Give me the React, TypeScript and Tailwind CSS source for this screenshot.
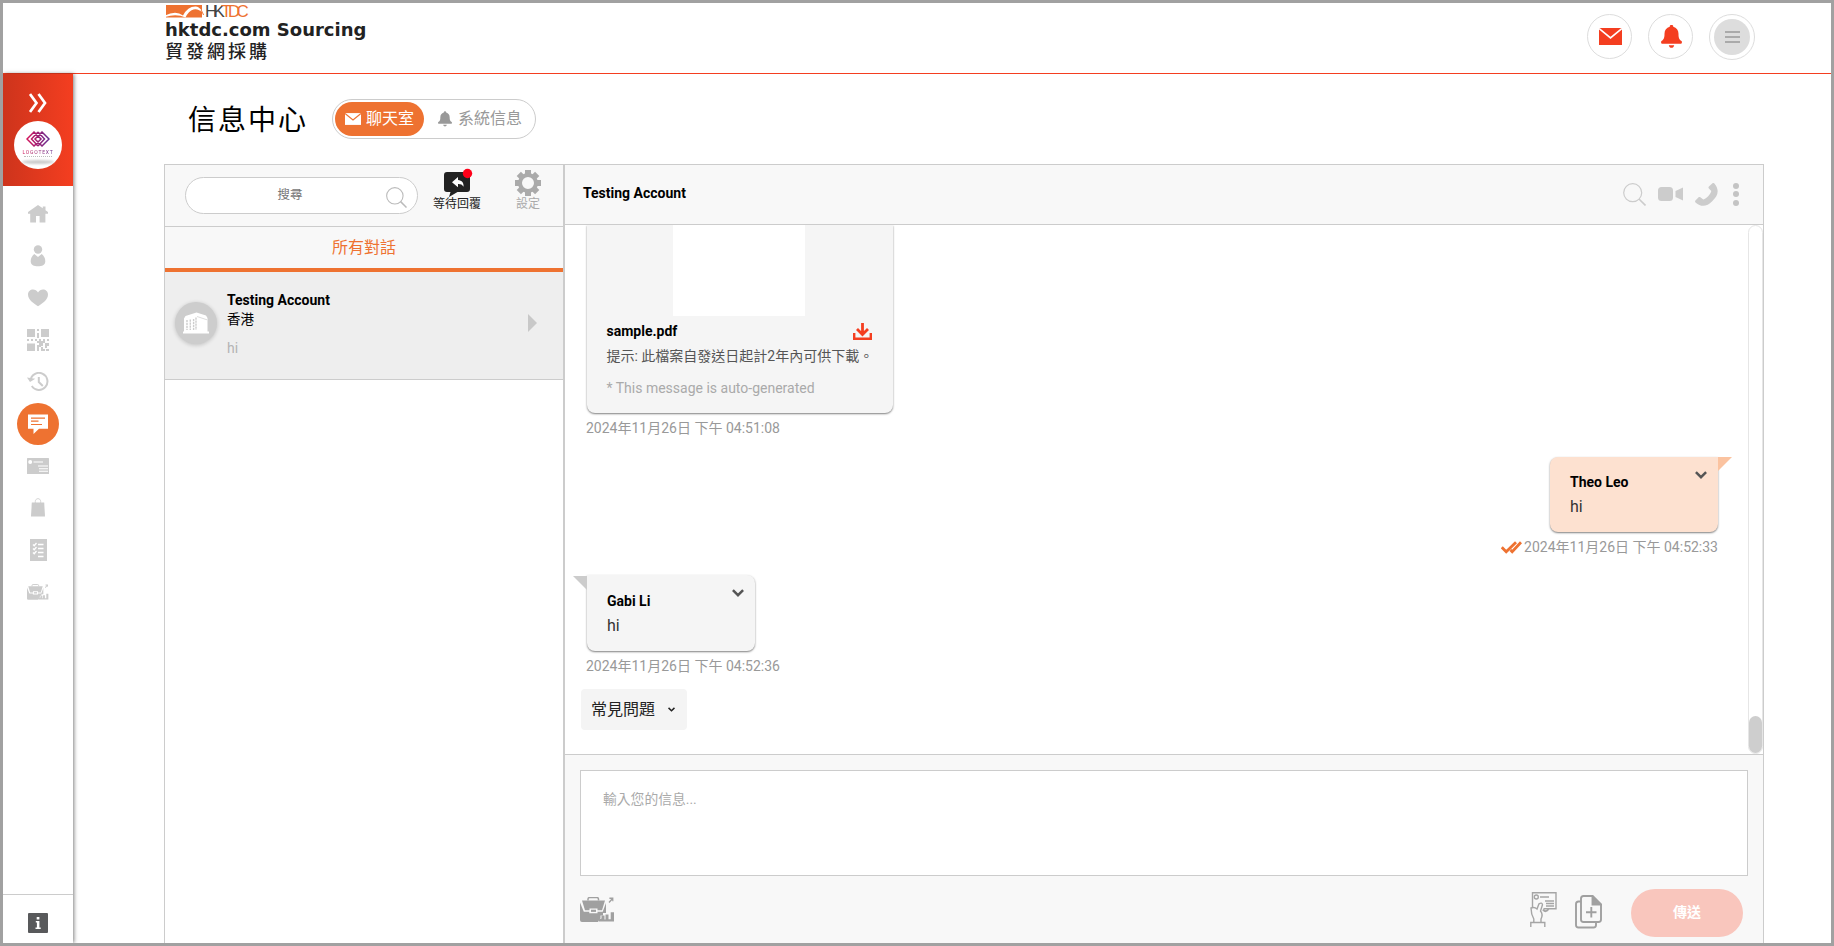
import type { ReactNode } from 'react'

type IconProps = { className?: string }

function HomeIcon(){
  return (
    <svg width="20" height="18" viewBox="0 0 20 18" fill="currentColor">
      <path d="M10 0 0 7v1.8h2.2V17.5H8V11h3.6v6.5h5.8V8.800H20V7l-2.500-1.800V1.500h-2.700v1.800z" />
    </svg>
  )
}

function UserIcon(){
  return (
    <svg width="16" height="22" viewBox="0 0 16 22" fill="currentColor">
      <circle cx="8" cy="4.500" r="4.200" />
      <path d="M4.300 9 8 12l3.700-3c2.300 1.600 3.600 4.400 3.600 7.200C15.300 20 12 21.200 8 21.200S.7 20 .7 16.200C.7 13.400 2 10.600 4.300 9z" />
    </svg>
  )
}

function HeartIcon(){
  return (
    <svg width="20" height="18" viewBox="0 0 20 18" fill="currentColor">
      <path d="M10 17.300C6 14.500 0 11 0 5.500 0 2.500 2.300.5 5 .5c2 0 4 1 5 3 1-2 3-3 5-3 2.700 0 5 2 5 5 0 5.500-6 9-10 11.800z" />
    </svg>
  )
}

function QrIcon(){
  return (
    <svg width="22" height="22" viewBox="0 0 22 22" fill="currentColor">
      <path d="M0 0h8v8H0zM14 0h8v8h-8zM0 14.500h8V22H0zM10 0h2v2h-2zM10 4h2v5h-2zM0 10h2v2H0zM4 10h2v2H4zM8 10h2v2H8zM20 10h2v2h-2zM12 10h2v2h4v2h-2v3h-2v-3h-4v-2h2zM16 10h2v2h-2zM10 16h2v6h-2zM12 14h2v4h-2zM14 18h2v4h-2zM18 14h4v3h-2v2h-2zM16 20h2v2h-2zM19 20h3v2h-3z" />
    </svg>
  )
}

function HistoryIcon(){
  return (
    <svg width="22" height="20" viewBox="0 0 22 20" fill="none" stroke="currentColor" strokeWidth="2">
      <path d="M3.500 8.500A8.500 8.500 0 1 1 4.800 14" />
      <path d="M0 5.500 3 10l5.300-3.300z" fill="currentColor" stroke="none" />
      <path d="M11.800 5v5l4 4" />
    </svg>
  )
}

function ChatIcon(){
  return (
    <svg width="20" height="20" viewBox="0 0 20 20">
      <path d="M0 .5h20v14.300h-9L5.500 20v-5.200H0z" fill="white" />
      <path d="M3 4.200h14M3 7.200h7.500M3 10.500h11" stroke="#ee7231" strokeWidth="1.200" />
    </svg>
  )
}

function CardIcon(){
  return (
    <svg width="22" height="16" viewBox="0 0 22 16">
      <rect width="22" height="16" rx=".5" fill="currentColor" />
      <circle cx="3.200" cy="4" r="2" fill="white" />
      <path d="M6.500 4H16M11 8h10M12 10.700h9M12 13.200h9" stroke="white" strokeWidth="1.100" />
    </svg>
  )
}

function BagIcon(){
  return (
    <svg width="14" height="19" viewBox="0 0 14 19" className="-mt-px">
      <path d="M.8 4.500h12.400L14 18.500H0z" fill="currentColor" />
      <path d="M4.300 5V3.500C4.300-.3 9.700-.3 9.700 3.500V5" fill="none" stroke="currentColor" strokeWidth=".8" />
    </svg>
  )
}

function ListIcon(){
  return (
    <svg width="17" height="22" viewBox="0 0 17 22">
      <rect width="17" height="22" fill="currentColor" />
      <path d="M8 5.500h5.500M8 9.500h5.500M8 13.500h5.500M8 17.500h5.500M3 5.500l1.200 1.200L6.500 4M3 9.500l1.200 1.200L6.500 8M3 13.500l1.200 1.200L6.500 12" fill="none" stroke="white" strokeWidth="1.300" />
    </svg>
  )
}

function BriefcaseIcon({ className }: IconProps){
  return (
    <svg className={className} viewBox="0 0 35 25" fill="currentColor">
      <path d="M8 3.500V2.200Q8 .6 9.600.6h7.300q1.600 0 1.600 1.600v1.300" fill="none" stroke="currentColor" strokeWidth="1.500" />
      <path d="M2 3.500h23L22 13.300h-4.500V11.500h-8v1.800H5z" />
      <path d="M0 5.500 3.800 14.800h5.500v1.500h8.200v-1.500h5.200L26 6v10h-3v2.500h-2.500V21L18 25H2q-2 0-2-2z" />
      <path d="M11 12.700h5v2.200h-5z" />
      <path d="M19 24.500v-2.300l2.500-.8V18.500h3v4h1v-5h3v4.800h2.200v-7H34v9.200zM28.500 5l2.700-3h-1.800V.5h4v3.800h-1.200V3l-2.700 3z" />
    </svg>
  )
}

function InfoIcon(){
  return (
    <svg width="20" height="20" viewBox="0 0 20 20">
      <rect width="20" height="20" rx="1" fill="#58595b" />
      <path d="M8.700 4h2.700v2.500H8.700zM7.800 8h3.600v6.500h1.300V16H7.500v-1.500h1.400V9.500H7.800z" fill="white" />
    </svg>
  )
}

function MailIcon({ className, line }: IconProps & { line: string }){
  return (
    <svg className={className} viewBox="0 0 23 17">
      <rect width="23" height="17" fill="currentColor" />
      <path d="M0 .5 11.500 10 23 .5" fill="none" stroke={line} strokeWidth="1.700" />
    </svg>
  )
}

function BellIcon({ className }: IconProps){
  return (
    <svg className={className} viewBox="0 0 21 23" fill="currentColor">
      <path d="M8.700 1.700a1.800 1.800 0 0 1 3.600 0c3.200.8 5.200 3.500 5.200 7 0 4 .5 5.600 3 7.300.8.700.5 2.800-.8 2.800H1.300C0 18.800-.3 16.700.5 16c2.500-1.700 3-3.300 3-7.300 0-3.500 2-6.200 5.200-7zM7.800 20.200h5.400c-.4 3.400-5 3.400-5.400 0z" />
    </svg>
  )
}

function SearchIcon({ className }: IconProps){
  return (
    <svg className={className} viewBox="0 0 23 23" fill="none" stroke="currentColor" strokeWidth="1.200">
      <circle cx="9.700" cy="9.700" r="9" />
      <path d="m16 16 6.500 6.500" strokeWidth="1.600" />
    </svg>
  )
}

function WaitingIcon(){
  return (
    <svg width="26" height="28" viewBox="0 0 26 28" className="overflow-visible">
      <path d="M3 3h20q3 0 3 3v14q0 3-3 3H13.500L5 28l1.500-5H3q-3 0-3-3V6q0-3 3-3z" fill="#222" />
      <path d="M8 13.300 14 8v3c4 .3 6 3 5.500 6.700-1.300-2.100-3-2.700-5.500-2.600v3.200z" fill="white" />
      <circle cx="23.500" cy="4.500" r="4.700" fill="#ff0019" />
    </svg>
  )
}

function GearIcon(){
  const teeth = [0, 45, 90, 135, 180, 225, 270, 315]
  return (
    <svg width="26" height="26" viewBox="0 0 26 26" fill="#aaa">
      {teeth.map(a => <path key={a} d="M10 0h6v5h-6z" transform={`rotate(${a} 13 13)`} />)}
      <circle cx="13" cy="13" r="8" fill="none" stroke="#aaa" strokeWidth="4" />
    </svg>
  )
}

function VideoIcon(){
  return (
    <svg width="25" height="14" viewBox="0 0 25 14" fill="currentColor">
      <rect width="15" height="14" rx="3.500" />
      <path d="m17.500 4 7.500-3.500v13L17.500 10z" />
    </svg>
  )
}

function PhoneIcon(){
  return (
    <svg width="23" height="23" viewBox="0 0 23 23" fill="currentColor">
      <path d="M17.500.3c.6-.5 1.400-.4 1.900.2 5.600 6.800 3.400 12.600-2.200 17.700-5.200 5.100-10.600 6.600-16.700 1.200-.7-.7-.6-1.400-.1-2l3-3c.6-.6 1.300-.6 1.900-.1l3 2.200c3.500-1.200 6.900-4.600 8-8.500l-2.400-2.600c-.6-.7-.6-1.300 0-1.900z" />
    </svg>
  )
}

function DownloadIcon(){
  return (
    <svg width="19" height="17" viewBox="0 0 19 17" fill="none" stroke="#f43e20" strokeWidth="2.800">
      <path d="M9.500 0v11M4 6l5.500 5.500L15 6" />
      <path d="M1.200 10v5.700h16.600V10" strokeWidth="2.400" />
    </svg>
  )
}

function DoubleTick(){
  return (
    <svg width="21" height="13" viewBox="0 0 21 13" fill="none" stroke="#ee7231" strokeWidth="2.800">
      <path d="m.8 6.300 4.400 4.400L15 1.200M9.500 9l1.700 1.700L20 1.200" />
    </svg>
  )
}

function HandCardIcon(){
  return (
    <svg width="27" height="36" viewBox="0 0 27 36" fill="none" stroke="#a5a5a5" strokeWidth="1.400">
      <path d="M2.500 15V.8H26v16H13.500" />
      <circle cx="6.300" cy="5" r="2" />
      <path d="M10 5h9M15 9h9M16 11.500h8M16 14h8" />
      <path d="M13 17.500q3 3.500 5.500-.5" strokeWidth="2" />
      <path d="M3.800 30.500V27Q1 22 1 16q3.500-1.300 6 1l2-5.200q3-1.800 3.500 1L10.500 19c2.500 3 1.800 5.500.5 8v3.500M.8 35v-4.500h14V35" />
    </svg>
  )
}

function AddFileIcon(){
  return (
    <svg width="27" height="34" viewBox="0 0 27 34" fill="none" stroke="#a0a0a0" strokeWidth="1.900">
      <path d="M6 6.500H3.500Q1 6.500 1 9v21q0 2.500 2.500 2.500h15Q21 32.500 21 30v-3" />
      <path d="M8.500 1h9L26 9.500v15q0 2.500-2.500 2.500h-15Q6 27 6 24.500v-21Q6 1 8.500 1z" />
      <path d="M17.500 1v8.500H26z" fill="#a0a0a0" />
      <path d="M16.300 12v10.500M11 17.300h10.500" />
    </svg>
  )
}

function Caret({ className }: IconProps){
  return (
    <svg className={className} viewBox="0 0 12 8" fill="none" stroke="currentColor" strokeWidth="2.500">
      <path d="m.9 1.200 5.100 5 5.100-5" />
    </svg>
  )
}

function BuildingIcon(){
  return (
    <svg width="26" height="22" viewBox="0 0 26 22">
      <path d="M1 6.500 2.500 4 13.500.5 23 3.500 24.500 6v13.500H26V21.500H0v-2h1z" fill="white" />
      <path d="M4 8v10M7.300 7.500V18M10.600 7V18M13 5.500V18" stroke="#cdcdcd" strokeWidth="1.400" strokeDasharray="2.200 .8" />
      <path d="m14 4.500 10 3.300" stroke="#cdcdcd" strokeWidth=".7" />
    </svg>
  )
}

const navItems: { id: string, icon: ReactNode, active?: boolean }[] = [
  { id: 'home', icon: <HomeIcon /> },
  { id: 'user', icon: <UserIcon /> },
  { id: 'favourites', icon: <HeartIcon /> },
  { id: 'qr', icon: <QrIcon /> },
  { id: 'history', icon: <HistoryIcon /> },
  { id: 'chat', icon: <ChatIcon />, active: true },
  { id: 'card', icon: <CardIcon /> },
  { id: 'bag', icon: <BagIcon /> },
  { id: 'list', icon: <ListIcon /> },
  { id: 'business', icon: <BriefcaseIcon className="h-4 w-[22px]" /> },
]

function Header(){
  return (
    <header className="flex h-[71px] shrink-0 justify-between border-b border-[#f43e20] bg-white pr-[76px] pl-[162px]">
      <div className="pt-0.5 text-[#222]">
        <div className="flex h-[13px] items-center">
          <svg width="40" height="13" viewBox="0 0 40 13">
            <rect x="1" width="36" height="12.500" fill="#ee7231" />
            <path d="M0 10.500Q11 5 18 10.500 23 1 31 1.500q4 .5 7.500 6.500-6-5-10-3.500-5 1.500-8 8-9-4-20.500-.5z" fill="white" />
            <path d="M36 5q1.500 2 2.500 5" fill="none" stroke="#ee7231" />
          </svg>
          <span className="font-['Liberation_Sans',sans-serif] text-[17px] leading-[17px] tracking-[-3.700px] whitespace-nowrap text-[#ee7231]"><span className="text-[#444]">HK</span>TDC</span>
        </div>
        <div className="mt-px font-['DejaVu_Sans',sans-serif] text-lg leading-[22px] font-bold whitespace-nowrap">hktdc.com Sourcing</div>
        <div className="text-lg leading-[22px] font-medium tracking-[3px]">貿發網採購</div>
      </div>
      <div className="flex gap-4 pt-[11px]">
        <div className="flex size-[45px] items-center justify-center rounded-full border border-[#ddd] pl-0.5 text-[#f43e20]">
          <MailIcon className="h-[17px] w-[23px]" line="white" />
        </div>
        <div className="flex size-[45px] items-center justify-center rounded-full border border-[#ddd] pl-0.5 text-[#f43e20]">
          <BellIcon className="h-[23px] w-[21px]" />
        </div>
        <div className="flex size-[46px] items-center justify-center rounded-full border border-[#ddd]">
          <div className="flex size-9 flex-col items-center justify-center gap-[3px] rounded-full bg-[#ddd]">
            <span className="h-0.5 w-[15px] bg-[#aaa]" />
            <span className="h-0.5 w-[15px] bg-[#aaa]" />
            <span className="h-0.5 w-[15px] bg-[#aaa]" />
          </div>
        </div>
      </div>
    </header>
  )
}

function Sidebar(){
  return (
    <aside className="relative z-10 flex w-[70px] shrink-0 flex-col bg-white shadow-[1px_0_4px_rgba(0,0,0,0.5)]">
      <div className="flex h-28 flex-col items-center bg-linear-to-r from-[#cd341c] to-[#f43e20] pt-[19px]">
        <svg width="18" height="20" viewBox="0 0 18 20" fill="none" stroke="white" strokeWidth="2.700">
          <path d="m1 1 6.500 9L1 19M9.500 1l6.500 9-6.500 9" />
        </svg>
        <div className="mt-2 flex size-12 flex-col items-center rounded-full bg-white pt-2.5">
          <svg width="24" height="16" viewBox="0 0 24 16" fill="none" strokeWidth="1.500">
            <defs>
              <linearGradient id="mark" x1="0" x2="1">
                <stop offset="0" stopColor="#d4145a" />
                <stop offset="1" stopColor="#662d91" />
              </linearGradient>
            </defs>
            <path d="M8 1 1 8l7 7 7-7zM16 1 9 8l7 7 7-7zM12 1 5.500 8 12 15M12 1l6.500 7L12 15" stroke="url(#mark)" />
          </svg>
          <div className="mt-0.5 bg-linear-to-r from-[#d4145a] to-[#662d91] bg-clip-text text-[5px] leading-[6px] tracking-[0.8px] whitespace-nowrap text-transparent">LOGOTEXT</div>
          <div className="mt-px h-px w-7 border-t border-dotted border-[#bbb]" />
          <div className="mt-[3px] h-1 w-8 rounded-[50%] bg-[#ccc] blur-[1px]" />
        </div>
      </div>
      <nav className="flex flex-1 flex-col items-center pt-[7px] text-[#ccc]">
        {navItems.map(n => (
          <a key={n.id} className={n.active ? 'flex size-[42px] items-center justify-center rounded-full bg-[#ee7231]' : 'flex size-[42px] items-center justify-center'}>
            {n.icon}
          </a>
        ))}
      </nav>
      <div className="flex h-[49px] justify-center border-t border-[#ccc] pt-[18px]">
        <InfoIcon />
      </div>
    </aside>
  )
}

function ConversationList(){
  return (
    <section className="flex w-[401px] shrink-0 flex-col border-r-2 border-l border-[#ccc]">
      <div className="flex h-[62px] shrink-0 border-b border-[#ccc] bg-[#f8f8f8] pl-5">
        <div className="mt-3 flex h-[37px] w-[233px] items-center rounded-full border border-[#ccc] bg-white pr-2.5 pl-2">
          <span className="flex-1 pb-px text-center text-[12.5px] text-[#777]">搜尋</span>
          <SearchIcon className="mt-1 size-[21px] text-[#bbb]" />
        </div>
        <div className="ml-[15px] flex w-12 flex-col items-center pt-1">
          <WaitingIcon />
          <span className="-mt-px text-xs leading-4 whitespace-nowrap text-[#222]">等待回覆</span>
        </div>
        <div className="ml-[23px] flex w-12 flex-col items-center pt-[5px]">
          <GearIcon />
          <span className="text-xs leading-4 text-[#aaa]">設定</span>
        </div>
      </div>
      <div className="flex h-[45px] shrink-0 items-center justify-center border-b-4 border-[#ee7231] bg-[#f8f8f8] pt-px text-base text-[#ee7231]">所有對話</div>
      <div className="flex h-[108px] shrink-0 items-center border-b border-[#ccc] bg-[#eee] pr-[26px] pb-1.5 pl-2.5">
        <div className="flex size-[42px] items-center justify-center rounded-full bg-[#cdcdcd] shadow-[0_1px_4px_rgba(0,0,0,0.2)]">
          <BuildingIcon />
        </div>
        <div className="ml-2.5 flex-1 pt-0.5 text-sm">
          <div className="leading-5 font-bold text-black">Testing Account</div>
          <div className="text-[13.500px] leading-[18px] text-black">香港</div>
          <div className="mt-2.5 leading-5 text-[#b4b4b4]">hi</div>
        </div>
        <svg width="9" height="18" viewBox="0 0 9 18"><path d="M0 0v18l9-9z" fill="#c8c8c8" /></svg>
      </div>
    </section>
  )
}

function Message({ name, text, mine }: { name: string, text: string, mine?: boolean }){
  return (
    <div className={mine ? 'relative h-[75px] w-[168px] rounded-lg rounded-tr-none bg-[#fde1d0] px-5 pt-[15px] shadow-[0_1px_2px_rgba(0,0,0,0.5)]' : 'relative h-[76px] w-[168px] rounded-lg rounded-tl-none bg-[#f5f5f5] px-5 pt-4 shadow-[0_1px_2px_rgba(0,0,0,0.5)]'}>
      <svg width="14" height="14" viewBox="0 0 14 14" className={mine ? 'absolute top-0 left-full' : 'absolute top-px right-full'}>
        <path d={mine ? 'M0 0h14L0 14z' : 'M0 0h14v14z'} fill={mine ? '#fbc3a0' : '#ccc'} />
      </svg>
      <Caret className="absolute top-3.5 right-[11px] h-2 w-3 text-[#555]" />
      <div className="text-sm leading-5 font-bold text-black">{name}</div>
      <div className="mt-[3px] text-base leading-6 text-[#333]">{text}</div>
    </div>
  )
}

function ChatPanel(){
  return (
    <section className="flex min-w-0 flex-1 flex-col border-r border-[#ccc]">
      <div className="flex h-[60px] shrink-0 items-center justify-between border-b border-[#ccc] bg-[#f8f8f8] pr-6 pb-px pl-[18px]">
        <h2 className="pb-0.5 text-sm font-bold text-black">Testing Account</h2>
        <div className="flex items-center gap-3 text-[#ccc]">
          <SearchIcon className="size-[23px]" />
          <VideoIcon />
          <PhoneIcon />
          <div className="ml-[3px] flex flex-col gap-[2.500px]">
            <span className="size-1.5 rounded-full bg-[#c4c4c4]" />
            <span className="size-1.5 rounded-full bg-[#c4c4c4]" />
            <span className="size-1.5 rounded-full bg-[#c4c4c4]" />
          </div>
        </div>
      </div>

      <div className="flex h-[529px] shrink-0">
        <div className="flex-1 overflow-hidden pr-[30px] pl-[22px] text-sm text-[#999]">
          <div className="h-[188px] w-[306px] rounded-b-lg bg-[#f5f5f5] pr-[21px] pl-[19.500px] shadow-[0_1px_2px_rgba(0,0,0,0.5)]">
            <div className="mx-auto h-[91px] w-[132px] bg-white" />
            <div className="flex items-center justify-between pt-[5px]">
              <span className="leading-5 font-bold text-black">sample.pdf</span>
              <DownloadIcon />
            </div>
            <div className="mt-[5px] leading-5 whitespace-nowrap text-[#555]">提示: 此檔案自發送日起計2年內可供下載。</div>
            <div className="mt-3 leading-5 text-[#aaa]">* This message is auto-generated</div>
          </div>
          <div className="mt-[5px] -ml-px leading-5">2024年11月26日 下午 04:51:08</div>

          <div className="mt-[19px] flex flex-col items-end">
            <Message name="Theo Leo" text="hi" mine />
            <div className="mt-[5px] flex items-center gap-0.5 leading-5">
              <DoubleTick />
              <span>2024年11月26日 下午 04:52:33</span>
            </div>
          </div>

          <div className="mt-[18px]">
            <Message name="Gabi Li" text="hi" />
            <div className="mt-[5px] -ml-px leading-5">2024年11月26日 下午 04:52:36</div>
          </div>

          <button className="mt-[13px] -ml-1.5 flex h-[41px] w-[106px] items-center gap-[13px] rounded bg-[#f4f4f4] pl-2.5 text-base text-[#222]">
            常見問題
            <Caret className="h-[5px] w-[7px]" />
          </button>
        </div>
        <div className="flex w-[15px] flex-col justify-end rounded-full border border-[#e6e6e6]">
          <div className="h-[37px] w-[13px] rounded-full bg-[#cecece]" />
        </div>
      </div>

      <div className="flex-1 border-t border-[#ccc] bg-[#f8f8f8] pt-[15px] pr-[15px] pl-[15px]">
        <div className="h-[106px] border border-[#ccc] bg-white px-[22px] pt-[18px] text-[13.800px] leading-5 text-[#aaa]">輸入您的信息...</div>
        <div className="flex pt-[13px] pr-[5px]">
          <BriefcaseIcon className="mt-2 h-[25px] w-[35px] text-[#a0a0a0]" />
          <div className="mt-[3px] ml-auto"><HandCardIcon /></div>
          <div className="mt-1.5 mr-[29px] ml-[18px]"><AddFileIcon /></div>
          <button className="h-12 w-28 rounded-full bg-[#f9c6bd] pb-0.5 text-sm font-bold text-white">傳送</button>
        </div>
      </div>
    </section>
  )
}

export default function App(){
  return (
    <div className="flex h-[946px] w-[1834px] flex-col overflow-hidden border-3 border-[#a1a1a1] bg-white font-['Roboto','Noto_Sans_CJK_TC',sans-serif]">
      <Header />
      <div className="flex min-h-0 flex-1">
        <Sidebar />
        <main className="flex min-w-0 flex-1 flex-col pr-[67px] pl-[91px]">
          <div className="flex h-[90px] shrink-0 items-center pl-6">
            <h1 className="pt-[3px] text-[28px] leading-8 tracking-[2px] text-black">信息中心</h1>
            <div className="ml-6 flex h-10 w-[204px] items-center rounded-full border border-[#ccc] p-0.5 text-base">
              <div className="flex h-[34px] w-[89px] items-center gap-[5px] rounded-full bg-[#ee7231] pl-2.5 whitespace-nowrap text-white">
                <MailIcon className="h-3 w-4" line="#ee7231" />
                聊天室
              </div>
              <div className="ml-3.5 flex items-center gap-1.5 whitespace-nowrap text-[#999]">
                <BellIcon className="h-4 w-[14px]" />
                系統信息
              </div>
            </div>
          </div>
          <div className="flex min-h-0 flex-1 border-t border-[#ccc]">
            <ConversationList />
            <ChatPanel />
          </div>
        </main>
      </div>
    </div>
  )
}
